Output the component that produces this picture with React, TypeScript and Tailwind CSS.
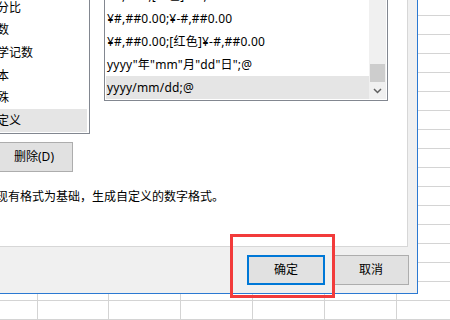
import type React from "react";

const colClasses = [
  "w-[38px]",
  "w-[71px]",
  "w-[72px]",
  "w-[72px]",
  "w-[72px]",
  "w-[72px]",
  "w-[72px]",
];

const categories = ["常规", "数值", "货币", "会计专用", "日期", "时间", "百分比", "分数", "科学记数", "文本", "特殊", "自定义"];

const formats = [
  "¥#,##0;¥-#,##0",
  "¥#,##0;[红色]¥-#,##0",
  "¥#,##0.00;¥-#,##0.00",
  "¥#,##0.00;[红色]¥-#,##0.00",
  'yyyy"年"mm"月"dd"日";@',
  "yyyy/mm/dd;@",
];

const SheetGrid: React.FC = () => (
  <div className="flex flex-col">
    {Array.from({ length: 17 }).map((_, r) => (
      <div key={r} className={`flex shrink-0 ${r === 0 ? "h-[16px]" : "h-[19px]"}`}>
        {colClasses.map((w, c) => (
          <div key={c} className={`${w} h-full shrink-0 border-r border-b border-[#d4d4d4]`} />
        ))}
      </div>
    ))}
  </div>
);

const Chevron: React.FC = () => (
  <svg width="9" height="6" viewBox="0 0 9 6">
    <path d="M1 1 L4.5 4.5 L8 1" fill="none" stroke="#606060" strokeWidth="1.5" />
  </svg>
);

const Dialog: React.FC = () => (
  <div className="absolute left-[-24px] top-[-30px] w-[442px] h-[324px] border border-[#2b79d2] bg-[#f0f0f0] flex flex-col">
    {/* tab page */}
    <div className="h-[276px] w-[431px] shrink-0 border border-[#d7d7d7] bg-white pt-[8px] pl-[2px] flex flex-col">
      <div className="flex items-start">
        {/* category list */}
        <div className="w-[110px] h-[154px] shrink-0 border border-[#828790] p-[1px] pr-[2px] overflow-hidden flex flex-col justify-end">
          {categories.map((c, i) => (
            <div
              key={c}
              className={`h-[22.6px] shrink-0 pl-[3px] flex items-center leading-[16px] ${
                i === categories.length - 1 ? "bg-[#e5e5e5]" : ""
              }`}
            >
              {c}
            </div>
          ))}
        </div>
        {/* type list */}
        <div className="ml-[14px] w-[284px] h-[121px] shrink-0 border border-[#828790] p-[1px] flex overflow-hidden">
          <div className="flex-1 flex flex-col justify-end overflow-hidden">
            {formats.map((f, i) => (
              <div
                key={f}
                className={`h-[23px] shrink-0 pl-[1px] flex items-center leading-[16px] tracking-[0.2px] whitespace-nowrap ${
                  i === formats.length - 1 ? "bg-[#e5e5e5]" : ""
                }`}
              >
                {f}
              </div>
            ))}
          </div>
          <div className="w-[17px] shrink-0 bg-[#f0f0f0] flex flex-col justify-end">
            <div className="h-[18px] mx-[1px] bg-[#cdcdcd]" />
            <div className="h-[17px] flex items-center justify-center">
              <Chevron />
            </div>
          </div>
        </div>
      </div>
      <button className="mt-[8px] ml-[15px] w-[78px] h-[30px] shrink-0 border border-[#adadad] bg-[#e1e1e1] leading-[16px]">
        删除(D)
      </button>
      <div className="mt-[17px] ml-[4px] leading-[16px] whitespace-nowrap">
        以现有格式为基础，生成自定义的数字格式。
      </div>
    </div>
    {/* footer */}
    <div className="flex-1 flex justify-end items-start pt-[8px] pr-[8px] gap-[8px]">
      <button className="w-[78px] h-[30px] border-2 border-[#0078d7] bg-[#e1e1e1] leading-[16px]">确定</button>
      <button className="w-[76px] h-[30px] border border-[#adadad] bg-[#e1e1e1] leading-[16px]">取消</button>
    </div>
  </div>
);

export default function App() {
  return (
    <div className="relative w-[450px] h-[320px] overflow-hidden bg-white text-[12px] text-black font-['Noto_Sans','Noto_Sans_CJK_SC',sans-serif]">
      <SheetGrid />
      <Dialog />
      <div className="absolute left-[230px] top-[234px] w-[105px] h-[64px] border-[3px] border-[#f23b3b]" />
    </div>
  );
}
